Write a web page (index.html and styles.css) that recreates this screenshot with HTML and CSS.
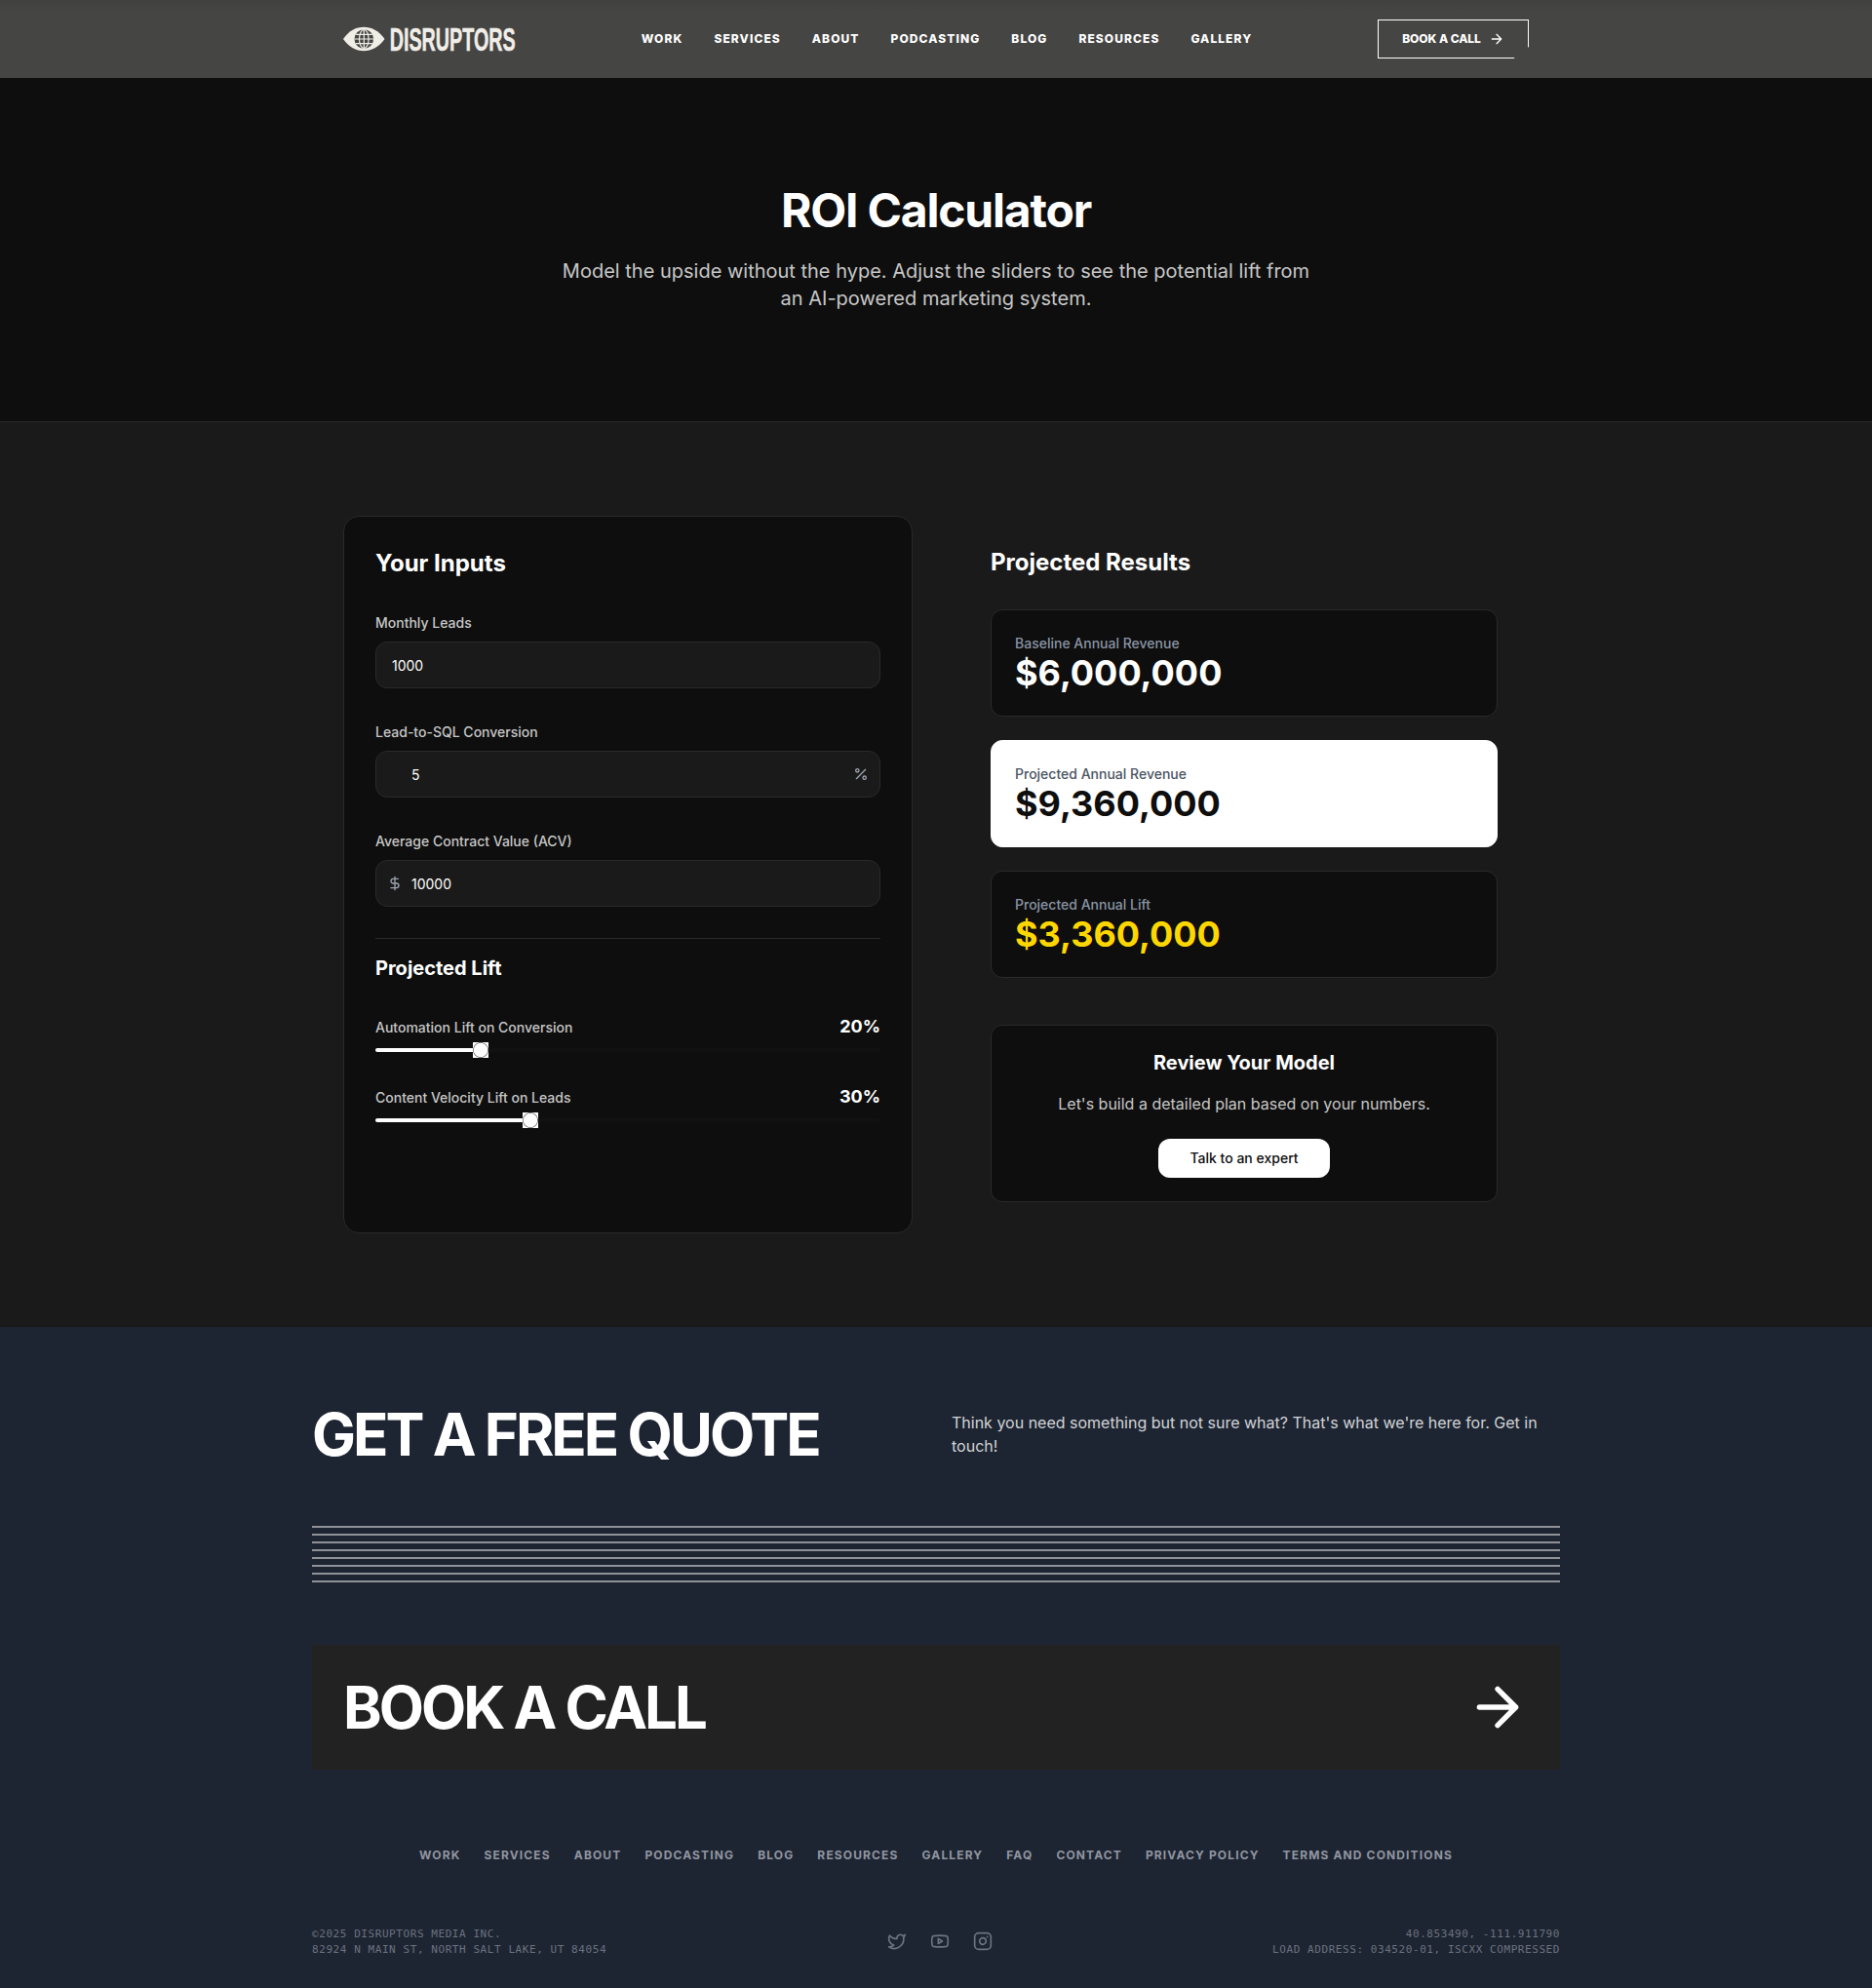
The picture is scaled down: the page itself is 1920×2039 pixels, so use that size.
FILE: index.html
```html
<!DOCTYPE html>
<html lang="en">
<head>
<meta charset="utf-8">
<title>ROI Calculator | Disruptors</title>
<link rel="stylesheet" href="styles.css">
</head>
<body>
<header class="site-header">
  <div class="header-inner">
    <a class="logo">
      <svg width="177" height="26" viewBox="0 0 177 26">
        <path d="M0 13C6 4.500 13 .8 21 .8S36.500 4.500 42.500 13C36.500 21.500 29 25.200 21 25.200S6 21.500 0 13Z" fill="#f1eee8"/>
        <circle cx="21.300" cy="13" r="9.800" fill="#444442"/>
        <g fill="none" stroke="#f1eee8" stroke-width="1.200">
          <ellipse cx="21.300" cy="13" rx="4.800" ry="9.500"/>
          <path d="M21.300 3.300V22.700M11.500 13H31.100M12.800 8.300H29.800M12.800 17.700H29.800"/>
        </g>
        <text class="logo-text" transform="translate(47.700 24.700) scale(.6 1)" textLength="215" lengthAdjust="spacingAndGlyphs">DISRUPTORS</text>
      </svg>
    </a>
    <nav class="main-nav">
      <a>WORK</a><a>SERVICES</a><a>ABOUT</a><a>PODCASTING</a><a>BLOG</a><a>RESOURCES</a><a>GALLERY</a>
    </nav>
    <a class="header-cta">BOOK A CALL
      <svg class="icon" width="16" height="16" viewBox="0 0 24 24"><path d="M5 12h14M12 5l7 7-7 7"/></svg>
    </a>
  </div>
</header>

<section class="hero">
  <h1>ROI Calculator</h1>
  <p>Model the upside without the hype. Adjust the sliders to see the potential lift from an AI-powered marketing system.</p>
</section>

<main class="calculator">
  <div class="calc-grid">
    <form class="inputs">
      <h2>Your Inputs</h2>
      <div class="field">
        <div class="field-label"><label>Monthly Leads</label></div>
        <div class="field-box">1000</div>
      </div>
      <div class="field">
        <div class="field-label"><label>Lead-to-SQL Conversion</label></div>
        <div class="field-box with-icon">5
          <svg class="icon field-icon right" width="16" height="16" viewBox="0 0 24 24"><path d="M19 5L5 19"/><circle cx="6.500" cy="6.500" r="2.500"/><circle cx="17.500" cy="17.500" r="2.500"/></svg>
        </div>
      </div>
      <div class="field">
        <div class="field-label"><label>Average Contract Value (ACV)</label></div>
        <div class="field-box with-icon">10000
          <svg class="icon field-icon left" width="16" height="16" viewBox="0 0 24 24"><path d="M12 2v20M17 5H9.500a3.500 3.500 0 0 0 0 7h5a3.500 3.500 0 0 1 0 7H6"/></svg>
        </div>
      </div>
      <div class="lift">
        <h3>Projected Lift</h3>
        <div class="slider">
          <div class="slider-head"><label>Automation Lift on Conversion</label><b>20%</b></div>
          <div class="track"><span class="fill" style="width:100.4px"></span><span class="thumb"></span></div>
        </div>
        <div class="slider">
          <div class="slider-head"><label>Content Velocity Lift on Leads</label><b>30%</b></div>
          <div class="track"><span class="fill" style="width:150.6px"></span><span class="thumb"></span></div>
        </div>
      </div>
    </form>

    <div class="results">
      <h2>Projected Results</h2>
      <div class="cards">
        <div class="card"><p>Baseline Annual Revenue</p><strong>$6,000,000</strong></div>
        <div class="card light"><p>Projected Annual Revenue</p><strong>$9,360,000</strong></div>
        <div class="card gold"><p>Projected Annual Lift</p><strong>$3,360,000</strong></div>
      </div>
      <div class="review">
        <h3>Review Your Model</h3>
        <p>Let's build a detailed plan based on your numbers.</p>
        <a class="btn">Talk to an expert</a>
      </div>
    </div>
  </div>
</main>

<footer class="site-footer">
  <div class="footer-inner">
    <div class="quote">
      <h2>GET A FREE QUOTE</h2>
      <p>Think you need something but not sure what? That's what we're here for. Get in touch!</p>
    </div>
    <div class="stripes"><i></i><i></i><i></i><i></i><i></i><i></i><i></i><i></i></div>
    <a class="book"><span>BOOK A CALL</span>
      <svg class="icon" width="64" height="64" viewBox="0 0 24 24"><path d="M5 12h14M12 5l7 7-7 7"/></svg>
    </a>
    <nav class="footer-nav">
      <a>WORK</a><a>SERVICES</a><a>ABOUT</a><a>PODCASTING</a><a>BLOG</a><a>RESOURCES</a><a>GALLERY</a><a>FAQ</a><a>CONTACT</a><a>PRIVACY POLICY</a><a>TERMS AND CONDITIONS</a>
    </nav>
    <div class="legal">
      <div class="legal-text">©2025 DISRUPTORS MEDIA INC.<br>82924 N MAIN ST, NORTH SALT LAKE, UT 84054</div>
      <div class="social">
        <svg class="icon" width="20" height="20" viewBox="0 0 24 24"><path d="M22 4s-.7 2.100-2 3.400c1.600 10-9.400 17.300-18 11.600 2.200.1 4.400-.6 6-2C3 15.500.5 9.600 3 5c2.200 2.600 5.600 4.100 9 4-.9-4.200 4-6.600 7-3.800 1.100 0 3-1.200 3-1.200z"/></svg>
        <svg class="icon" width="20" height="20" viewBox="0 0 24 24"><path d="M2.500 17a24.120 24.120 0 0 1 0-10 2 2 0 0 1 1.400-1.400 49.560 49.560 0 0 1 16.200 0A2 2 0 0 1 21.500 7a24.120 24.120 0 0 1 0 10 2 2 0 0 1-1.400 1.400 49.550 49.550 0 0 1-16.200 0A2 2 0 0 1 2.500 17M10 15l5-3-5-3z"/></svg>
        <svg class="icon" width="20" height="20" viewBox="0 0 24 24"><rect x="2" y="2" width="20" height="20" rx="5"/><path d="M16 11.370A4 4 0 1 1 12.630 8 4 4 0 0 1 16 11.370zM17.500 6.500h.01"/></svg>
      </div>
      <div class="legal-text right-text">40.853490, -111.911790<br>LOAD ADDRESS: 034520-01, ISCXX COMPRESSED</div>
    </div>
  </div>
</footer>
</body>
</html>
```
FILE: styles.css
```css
* { box-sizing: border-box; margin: 0; padding: 0; }
body { background: #0e0e0e; color: #fff; font-family: Inter, "Liberation Sans", sans-serif; font-size: 16px; line-height: 24px; }
.icon { display: block; flex: none; fill: none; stroke: currentColor; stroke-width: 2; stroke-linecap: round; stroke-linejoin: round; }

.site-header { height: 80px; background: linear-gradient(#41413f, #454543 12px, #454543); }
.header-inner { max-width: 1280px; height: 80px; margin: 0 auto; padding: 0 32px; display: flex; align-items: center; justify-content: space-between; }
.logo svg { display: block; overflow: visible; }
.logo-text { font: bold 33.500px "Liberation Sans", Arial, sans-serif; fill: #f1eee8; stroke: #f1eee8; stroke-width: .5px; }
.main-nav { display: flex; gap: 32px; font-size: 12px; font-weight: 800; letter-spacing: 1.080px; line-height: 16px; }
.header-cta { width: 155px; height: 40px; display: flex; align-items: center; justify-content: center; gap: 8px; border: 1px solid #fff; font-size: 12px; font-weight: 800; letter-spacing: -.050px; clip-path: polygon(0 0, 100% 0, 100% 70%, 90% 100%, 0 100%); }

.hero { height: 353px; padding-top: 112px; text-align: center; background: #0e0e0e; border-bottom: 1px solid #2a2a2a; }
.hero h1 { font-size: 48px; line-height: 48px; font-weight: 700; letter-spacing: -1.200px; }
.hero p { max-width: 768px; margin: 24px auto 0; font-size: 20px; line-height: 28px; color: #c7c7c7; }

.calculator { background: #1a1a1a; padding: 96px 0; }
.calc-grid { max-width: 1216px; margin: 0 auto; display: grid; grid-template-columns: 1fr 1fr; gap: 48px; }
h2 { font-size: 24px; line-height: 32px; font-weight: 700; }
h3 { font-size: 20px; line-height: 28px; font-weight: 700; }
.inputs { display: flex; flex-direction: column; gap: 32px; height: 736px; padding: 32px; background: #0e0e0e; border: 1px solid #2a2a2a; border-radius: 16px; }
.inputs label { font-size: 14px; font-weight: 500; color: #c7c7c7; }
.field-label { height: 24px; margin-bottom: 8px; }
.field-box { position: relative; height: 48px; padding: 0 16px; border: 1px solid #2a2a2a; border-radius: 12px; background: #1a1a1a; font-size: 14px; line-height: 48px; }
.field-box.with-icon { padding-left: 36px; }
.field-icon { position: absolute; top: 15px; color: #9ca3af; }
.field-icon.left { left: 11px; }
.field-icon.right { right: 11px; }
.lift { display: flex; flex-direction: column; gap: 32px; padding-top: 16px; border-top: 1px solid #2a2a2a; }
.slider-head { display: flex; justify-content: space-between; align-items: baseline; height: 28px; line-height: 28px; }
.slider-head b { font-size: 18px; }
.track { display: flex; align-items: center; height: 4px; margin-top: 8px; border-radius: 2px; background: #111; }
.fill { height: 4px; border-radius: 2px 0 0 2px; background: #fff; }
.thumb { flex: none; width: 16px; height: 16px; background: radial-gradient(circle, #fff 6.800px, #888 7.300px, #888 7.700px, #fff 8.200px); }

.results { padding: 32px; }
.cards { display: flex; flex-direction: column; gap: 24px; margin: 32px 0 48px; }
.card { height: 110px; padding: 24px; border: 1px solid #2a2a2a; border-radius: 12px; background: #0e0e0e; }
.card p { font-size: 14px; font-weight: 500; line-height: 20px; color: #8a95a5; }
.card strong { display: block; font-size: 36px; line-height: 40px; font-weight: 700; }
.card.light { background: #fff; border-color: #fff; color: #0e0e0e; }
.card.light p { color: #4b5563; }
.card.gold strong { color: #ffd700; }
.review { height: 182px; padding: 24px; border: 1px solid #2a2a2a; border-radius: 12px; background: #0e0e0e; display: flex; flex-direction: column; align-items: center; }
.review p { margin: 16px 0 24px; color: #c7c7c7; }
.btn { width: 176px; height: 40px; border-radius: 12px; background: #fff; color: #0e0e0e; font-size: 14px; font-weight: 500; line-height: 40px; text-align: center; }

.site-footer { background: #1e2532; padding: 80px 0 32px; }
.footer-inner { width: 1280px; margin: 0 auto; }
.quote { display: grid; grid-template-columns: 1fr 1fr; gap: 32px; align-items: center; height: 60px; }
.quote h2, .book span { font-size: 60px; line-height: 60px; font-weight: 700; letter-spacing: -3px; }
.quote p { color: #d1d3d7; }
.stripes { display: flex; flex-direction: column; gap: 6px; margin: 64px 0; }
.stripes i { height: 2px; background: #8f9198; }
.book { display: flex; align-items: center; justify-content: space-between; height: 128px; padding: 0 32px; background: #222; }
.footer-nav { display: flex; justify-content: center; gap: 24px; margin: 80px 0 64px; font-size: 12px; line-height: 16px; font-weight: 700; letter-spacing: 1.135px; color: #9095a1; }
.legal { display: flex; align-items: center; justify-content: space-between; font-family: "DejaVu Sans Mono", monospace; font-size: 11px; line-height: 16px; letter-spacing: .570px; color: #6b7280; }
.legal-text { transform: translateY(1px); }
.social { display: flex; gap: 24px; }
.right-text { text-align: right; }
```
